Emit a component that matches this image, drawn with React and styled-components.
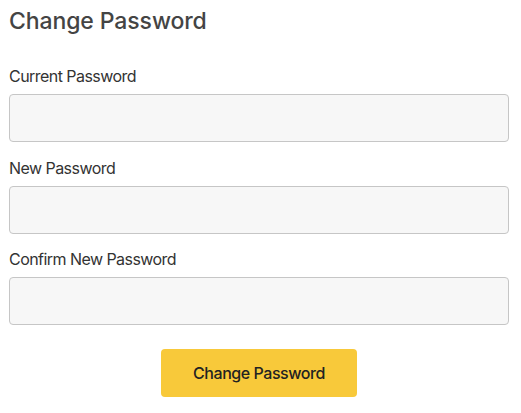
import React from "react";
import styled, { createGlobalStyle } from "styled-components";

const Global = createGlobalStyle`
  html, body { margin: 0; padding: 0; background: #ffffff; }
  body { font-family: Inter, "Noto Sans", "Liberation Sans", sans-serif; }
  * { box-sizing: border-box; }
`;

const Page = styled.div`
  width: 500px;
  margin-left: 9px;
  padding-top: 8px;
`;

const Title = styled.h2`
  margin: 0 0 29px;
  font-size: 23px;
  font-weight: 500;
  line-height: 27px;
  letter-spacing: -0.1px;
  color: #444444;
`;

const Form = styled.form`
  display: flex;
  flex-direction: column;
`;

const Field = styled.div`
  display: flex;
  flex-direction: column;
  gap: 6px;
  margin-bottom: 13.5px;
`;

const Label = styled.label`
  font-size: 16px;
  line-height: 24px;
  letter-spacing: -0.55px;
  color: #333333;
`;

const Input = styled.input`
  width: 100%;
  height: 48px;
  border: 1px solid #c6c6c6;
  border-radius: 4px;
  background: #f7f7f7;
  font: inherit;
  padding: 0 12px;
  outline: none;
`;

const Actions = styled.div`
  display: flex;
  justify-content: center;
  padding-top: 10.5px;
`;

const Button = styled.button`
  width: 196px;
  height: 48px;
  border: none;
  border-radius: 4px;
  background: #f8c93a;
  color: #222222;
  font-family: inherit;
  font-size: 16px;
  font-weight: 500;
  letter-spacing: -0.45px;
  cursor: pointer;
`;

const fields = [
  { id: "current", label: "Current Password" },
  { id: "new", label: "New Password" },
  { id: "confirm", label: "Confirm New Password" },
];

export default function App() {
  return (
    <>
      <Global />
      <Page>
        <Title>Change Password</Title>
        <Form onSubmit={(e) => e.preventDefault()}>
          {fields.map((f) => (
            <Field key={f.id}>
              <Label htmlFor={f.id}>{f.label}</Label>
              <Input id={f.id} type="password" />
            </Field>
          ))}
          <Actions>
            <Button type="submit">Change Password</Button>
          </Actions>
        </Form>
      </Page>
    </>
  );
}
